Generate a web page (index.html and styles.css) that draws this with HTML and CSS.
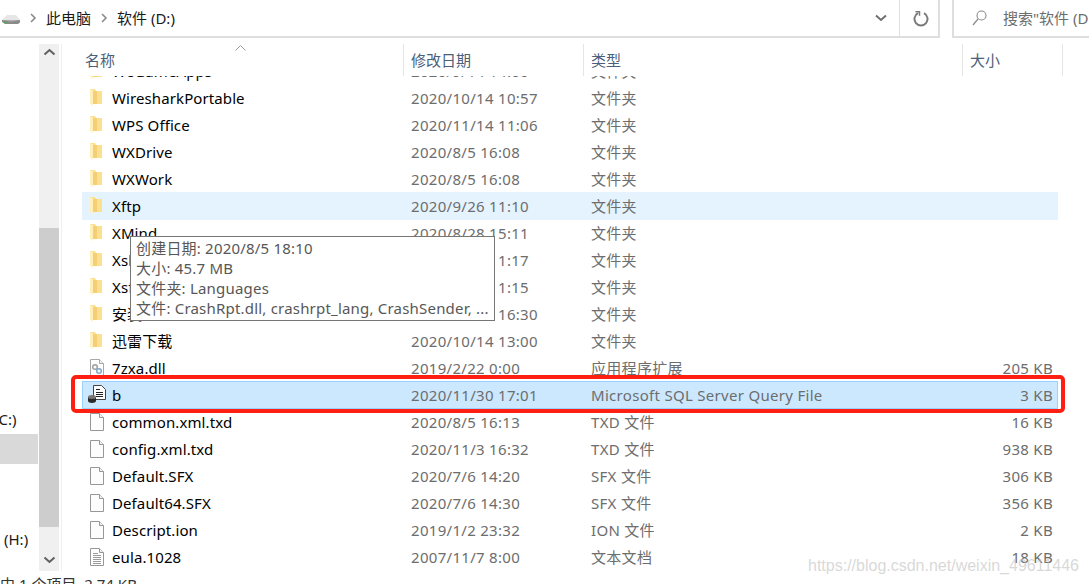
FILE: index.html
```html
<!DOCTYPE html>
<html lang="zh-CN">
<head>
    <meta charset="UTF-8">
    <title>软件 (D:)</title>
    <link rel="stylesheet" href="styles.css">
</head>
<body>
    <svg class="defs" width="0" height="0">
        <symbol id="folder" viewBox="0 0 16 20">
            <path d="M1 1h5l1 2h6v13H1z" fill="#fbe08f"/>
            <path d="M4 3h4v13H4z" fill="#f5cf77"/>
            <path d="M1 1l3 1.500V18l-3-2.500z" fill="#fff0ba"/>
        </symbol>
        <symbol id="file" viewBox="-1 -1 16 20">
            <path d="M.5 .5h9l4 4v13H.5z" fill="#fdfdfd" stroke="#979797"/>
            <path d="M9.500 .5v4h4" fill="#f2f2f2" stroke="#979797"/>
        </symbol>
        <symbol id="textfile" viewBox="-1 -1 16 20">
            <path d="M.5 .5h9l4 4v13H.5z" fill="#fff" stroke="#979797"/>
            <path d="M9.500 .5v4h4" fill="#f2f2f2" stroke="#979797"/>
            <path d="M3 5.500h5M3 7.500h8M3 9.500h8M3 11.500h8M3 13.500h8M3 15.500h8" stroke="#9a9a9a" fill="none"/>
        </symbol>
        <symbol id="dll" viewBox="-1 -1 16 20">
            <path d="M.5 .5h9l4 4v13H.5z" fill="#fff" stroke="#a8a8a8"/>
            <path d="M9.500 .5v4h4" fill="#f2f2f2" stroke="#a8a8a8"/>
            <circle cx="5" cy="8" r="2.300" fill="none" stroke="#a0a0a0" stroke-width="1.500"/>
            <circle cx="9" cy="12" r="2.300" fill="none" stroke="#7fa9c9" stroke-width="1.500"/>
        </symbol>
        <symbol id="sqlfile" viewBox="0 0 22 20">
            <path d="M6.500 .5h8l4 4v10h-12z" fill="#fff" stroke="#444"/>
            <path d="M9 4.500h4M9 7.500h7M9 9.500h7M9 11.500h7" stroke="#222" fill="none"/>
            <ellipse cx="5" cy="12" rx="4" ry="2" fill="#777"/>
            <path d="M1 12v4c0 2.500 8 2.500 8 0v-4c0 2.500-8 2.500-8 0z" fill="#2b2b2b"/>
        </symbol>
    </svg>

    <div class="toolbar">
        <div class="address">
            <svg class="drive" width="20" height="14" viewBox="0 0 20 14">
                <path d="M1 8l5-5h9l4 5z" fill="#e6e6e6"/>
                <path d="M1 8h18v2.500l-2 1.500H4l-3-2z" fill="#8a8a8a"/>
                <path d="M1 8l8 .5 10-.5-9 1.500z" fill="#c4c4c4"/>
                <path d="M3 10h3v1H3z" fill="#3fae49"/>
            </svg>
            <svg class="crumb-arrow" width="7" height="10" viewBox="0 0 7 10"><path d="M1 1l4 4-4 4" fill="none" stroke="#8a8a8a" stroke-width="1.600"/></svg>
            <span class="crumb">此电脑</span>
            <svg class="crumb-arrow crumb-arrow-second" width="7" height="10" viewBox="0 0 7 10"><path d="M1 1l4 4-4 4" fill="none" stroke="#8a8a8a" stroke-width="1.600"/></svg>
            <span class="crumb">软件 (D:)</span>
            <svg class="history" width="12" height="8" viewBox="0 0 12 8"><path d="M1 1.500l5 4.500 5-4.500" fill="none" stroke="#6f6f6f" stroke-width="2"/></svg>
        </div>
        <div class="refresh">
            <svg width="16" height="17" viewBox="0 0 16 17">
                <path d="M5 3.200a6.500 6.500 0 1 0 6 0" fill="none" stroke="#7a7a7a" stroke-width="2"/>
                <path d="M2.500 1.800h4v4" fill="none" stroke="#7a7a7a" stroke-width="1.500"/>
            </svg>
        </div>
        <div class="search">
            <svg width="15" height="16" viewBox="0 0 15 16">
                <circle cx="9.500" cy="5.500" r="4.500" fill="none" stroke="#8a8a8a" stroke-width="1.100"/>
                <path d="M6 9l-5 6" stroke="#8a8a8a" stroke-width="1.200"/>
            </svg>
            <span>搜索"软件 (D:)"</span>
        </div>
    </div>

    <div class="main">
        <nav class="nav">
            <div class="nav-item nav-c">(C:)</div>
            <div class="nav-item nav-selected"></div>
            <div class="nav-item"></div>
            <div class="nav-item"></div>
            <div class="nav-item nav-h">(H:)</div>
        </nav>

        <div class="scrollbar">
            <div class="scroll-top">
                <svg width="13" height="8" viewBox="0 0 13 8"><path d="M1.500 6.500l5-4.500 5 4.500" fill="none" stroke="#606060" stroke-width="2"/></svg>
            </div>
            <div class="scroll-thumb"></div>
            <div class="scroll-bottom">
                <svg width="13" height="8" viewBox="0 0 13 8"><path d="M1.500 1.500l5 4.500 5-4.500" fill="none" stroke="#606060" stroke-width="2"/></svg>
            </div>
        </div>

        <div class="content">
            <div class="header">
                <div class="col col-name">名称
                    <svg class="sort" width="11" height="6" viewBox="0 0 11 6"><path d="M.5 5.500l5-5 5 5" fill="none" stroke="#9a9a9a"/></svg>
                </div>
                <div class="col col-date">修改日期</div>
                <div class="col col-type">类型</div>
                <div class="col col-size">大小</div>
            </div>

            <div class="list">
                <div class="row row-clipped"><svg class="ico"><use href="#folder"/></svg><span class="name">WeGameApps</span><span>2020/9/14 14:00</span><span>文件夹</span><span class="size"></span></div>
                <div class="row"><svg class="ico"><use href="#folder"/></svg><span class="name">WiresharkPortable</span><span>2020/10/14 10:57</span><span>文件夹</span><span class="size"></span></div>
                <div class="row"><svg class="ico"><use href="#folder"/></svg><span class="name">WPS Office</span><span>2020/11/14 11:06</span><span>文件夹</span><span class="size"></span></div>
                <div class="row"><svg class="ico"><use href="#folder"/></svg><span class="name">WXDrive</span><span>2020/8/5 16:08</span><span>文件夹</span><span class="size"></span></div>
                <div class="row"><svg class="ico"><use href="#folder"/></svg><span class="name">WXWork</span><span>2020/8/5 16:08</span><span>文件夹</span><span class="size"></span></div>
                <div class="row row-hover"><svg class="ico"><use href="#folder"/></svg><span class="name">Xftp</span><span>2020/9/26 11:10</span><span>文件夹</span><span class="size"></span></div>
                <div class="row"><svg class="ico"><use href="#folder"/></svg><span class="name">XMind</span><span>2020/8/28 15:11</span><span>文件夹</span><span class="size"></span></div>
                <div class="row"><svg class="ico"><use href="#folder"/></svg><span class="name">Xshell</span><span>2020/9/26 11:17</span><span>文件夹</span><span class="size"></span></div>
                <div class="row"><svg class="ico"><use href="#folder"/></svg><span class="name">Xsftp</span><span>2020/9/26 11:15</span><span>文件夹</span><span class="size"></span></div>
                <div class="row"><svg class="ico"><use href="#folder"/></svg><span class="name">安装包</span><span>2020/10/14 16:30</span><span>文件夹</span><span class="size"></span></div>
                <div class="row"><svg class="ico"><use href="#folder"/></svg><span class="name">迅雷下载</span><span>2020/10/14 13:00</span><span>文件夹</span><span class="size"></span></div>
                <div class="row"><svg class="ico"><use href="#dll"/></svg><span class="name">7zxa.dll</span><span>2019/2/22 0:00</span><span>应用程序扩展</span><span class="size">205 KB</span></div>
                <div class="row row-selected"><svg class="ico ico-sql"><use href="#sqlfile"/></svg><span class="name">b</span><span>2020/11/30 17:01</span><span>Microsoft SQL Server Query File</span><span class="size">3 KB</span></div>
                <div class="row"><svg class="ico"><use href="#file"/></svg><span class="name">common.xml.txd</span><span>2020/8/5 16:13</span><span>TXD 文件</span><span class="size">16 KB</span></div>
                <div class="row"><svg class="ico"><use href="#file"/></svg><span class="name">config.xml.txd</span><span>2020/11/3 16:32</span><span>TXD 文件</span><span class="size">938 KB</span></div>
                <div class="row"><svg class="ico"><use href="#file"/></svg><span class="name">Default.SFX</span><span>2020/7/6 14:20</span><span>SFX 文件</span><span class="size">306 KB</span></div>
                <div class="row"><svg class="ico"><use href="#file"/></svg><span class="name">Default64.SFX</span><span>2020/7/6 14:30</span><span>SFX 文件</span><span class="size">356 KB</span></div>
                <div class="row"><svg class="ico"><use href="#file"/></svg><span class="name">Descript.ion</span><span>2019/1/2 23:32</span><span>ION 文件</span><span class="size">2 KB</span></div>
                <div class="row"><svg class="ico"><use href="#textfile"/></svg><span class="name">eula.1028</span><span>2007/11/7 8:00</span><span>文本文档</span><span class="size">18 KB</span></div>
            </div>
        </div>
    </div>

    <div class="status">中 1 个项目&nbsp; 2.74 KB</div>

    <div class="tooltip">
        <div>创建日期: 2020/8/5 18:10</div>
        <div>大小: 45.7 MB</div>
        <div>文件夹: Languages</div>
        <div>文件: CrashRpt.dll, crashrpt_lang, CrashSender, ...</div>
    </div>
    <div class="red-box"></div>
    <div class="watermark">https://blog.csdn.net/weixin_49611446</div>
</body>
</html>
```

FILE: styles.css
```css
* {
    box-sizing: border-box;
}
body {
    font-family: "Noto Sans", "Noto Sans CJK SC", sans-serif;
    font-size: 15px;
    margin: 0;
    width: 1089px;
    height: 584px;
    overflow: hidden;
    position: relative;
    background: white;
    color: #6d6d6d;
}
.defs {
    position: absolute;
}

/* top bar */
.toolbar {
    display: flex;
    height: 38px;
}
.address {
    width: 900px;
    display: flex;
    align-items: center;
    padding-bottom: 1px;
    border-bottom: 2px solid #dedede;
    border-right: 1px solid #dedede;
    color: #1a1a1a;
}
.drive {
    margin-left: 1px;
    margin-top: 2px;
}
.crumb-arrow {
    margin-left: 9px;
}
.crumb-arrow-second {
    margin-left: 10px;
}
.crumb {
    margin-left: 9px;
    line-height: 20px;
}
.history {
    margin-left: auto;
    margin-right: 12px;
}
.refresh {
    width: 40px;
    padding-left: 3px;
    display: flex;
    align-items: center;
    justify-content: center;
    border-bottom: 2px solid #dedede;
    border-right: 2px solid #dedede;
}
.search {
    margin-left: 12px;
    flex: 1;
    display: flex;
    align-items: center;
    gap: 16px;
    padding-left: 18px;
    padding-bottom: 1px;
    white-space: nowrap;
    overflow: hidden;
    border-bottom: 2px solid #dedede;
    border-left: 2px solid #dedede;
}
.search svg, .search span {
    flex: none;
}

/* left side */
.main {
    display: flex;
    height: 533px;
    padding-top: 6px;
}
.nav {
    width: 38px;
    margin-right: 1px;
    padding-top: 360px;
    color: #1a1a1a;
    overflow: hidden;
    white-space: nowrap;
}
.nav-item {
    height: 30px;
    line-height: 30px;
}
.nav-selected {
    background: #d9d9d9;
}
.nav-c {
    margin-left: -6px;
}
.nav-h {
    padding-left: 4px;
}
.scrollbar {
    width: 20px;
    display: grid;
    grid-template-rows: 184px 299px 1fr;
    background: #f0f0f0;
}
.scroll-top {
    display: flex;
    justify-content: center;
    padding-top: 4px;
}
.scroll-thumb {
    background: #cdcdcd;
}
.scroll-bottom {
    display: flex;
    justify-content: center;
    align-items: flex-end;
    padding-bottom: 7px;
}

/* file list */
.content {
    flex: 1;
    margin-left: 2px;
    padding-left: 20px;
    border-left: 1px solid #efefef;
}
.header {
    display: flex;
    height: 32px;
    color: #4c607a;
}
.col {
    line-height: 32px;
    padding-left: 7px;
    border-right: 1px solid #e5e5e5;
    position: relative;
}
.col-name {
    width: 322px;
    padding-left: 3px;
}
.col-date {
    width: 180px;
}
.col-type {
    width: 379px;
}
.col-size {
    width: 100px;
}
.sort {
    position: absolute;
    left: 153px;
    top: 1px;
}
.list {
    height: 495px;
    overflow: hidden;
}
.row {
    display: grid;
    grid-template-columns: 30px 299px 180px 1fr auto;
    align-items: center;
    width: 976px;
    height: 28px;
    line-height: 20px;
    margin-bottom: -1px;
    padding-right: 5px;
    letter-spacing: 0.3px;
    white-space: nowrap;
}
.row-clipped {
    margin-top: -19px;
}
.row-hover {
    background: #e5f3ff;
}
.row-selected {
    background: #cce8ff;
    border: 1px solid #99d1ff;
    padding-right: 4px;
    grid-template-columns: 29px 299px 180px 1fr auto;
}
.ico {
    width: 16px;
    height: 20px;
    margin-left: 7px;
}
.ico-sql {
    width: 22px;
    margin-left: 4px;
}
.name {
    color: #000;
    letter-spacing: 0.1px;
}
.size {
    text-align: right;
}

.status {
    height: 13px;
    line-height: 27px;
    color: #333;
    white-space: nowrap;
    overflow: hidden;
}

/* things on top */
.tooltip {
    position: absolute;
    left: 130px;
    top: 236px;
    width: 365px;
    height: 85px;
    padding: 1px 5px;
    background: white;
    border: 1px solid #767676;
    color: #575757;
    font-size: 15px;
    letter-spacing: 0.2px;
    line-height: 20px;
    white-space: nowrap;
}
.tooltip div {
    height: 20px;
}
.red-box {
    position: absolute;
    left: 71px;
    top: 375px;
    width: 994px;
    height: 38px;
    border: 4px solid #ff1e12;
    border-radius: 5px;
}
.watermark {
    position: absolute;
    left: 808px;
    top: 557px;
    font-family: "Liberation Sans", sans-serif;
    font-size: 16px;
    color: rgba(190, 190, 190, 0.6);
    white-space: nowrap;
}
```
